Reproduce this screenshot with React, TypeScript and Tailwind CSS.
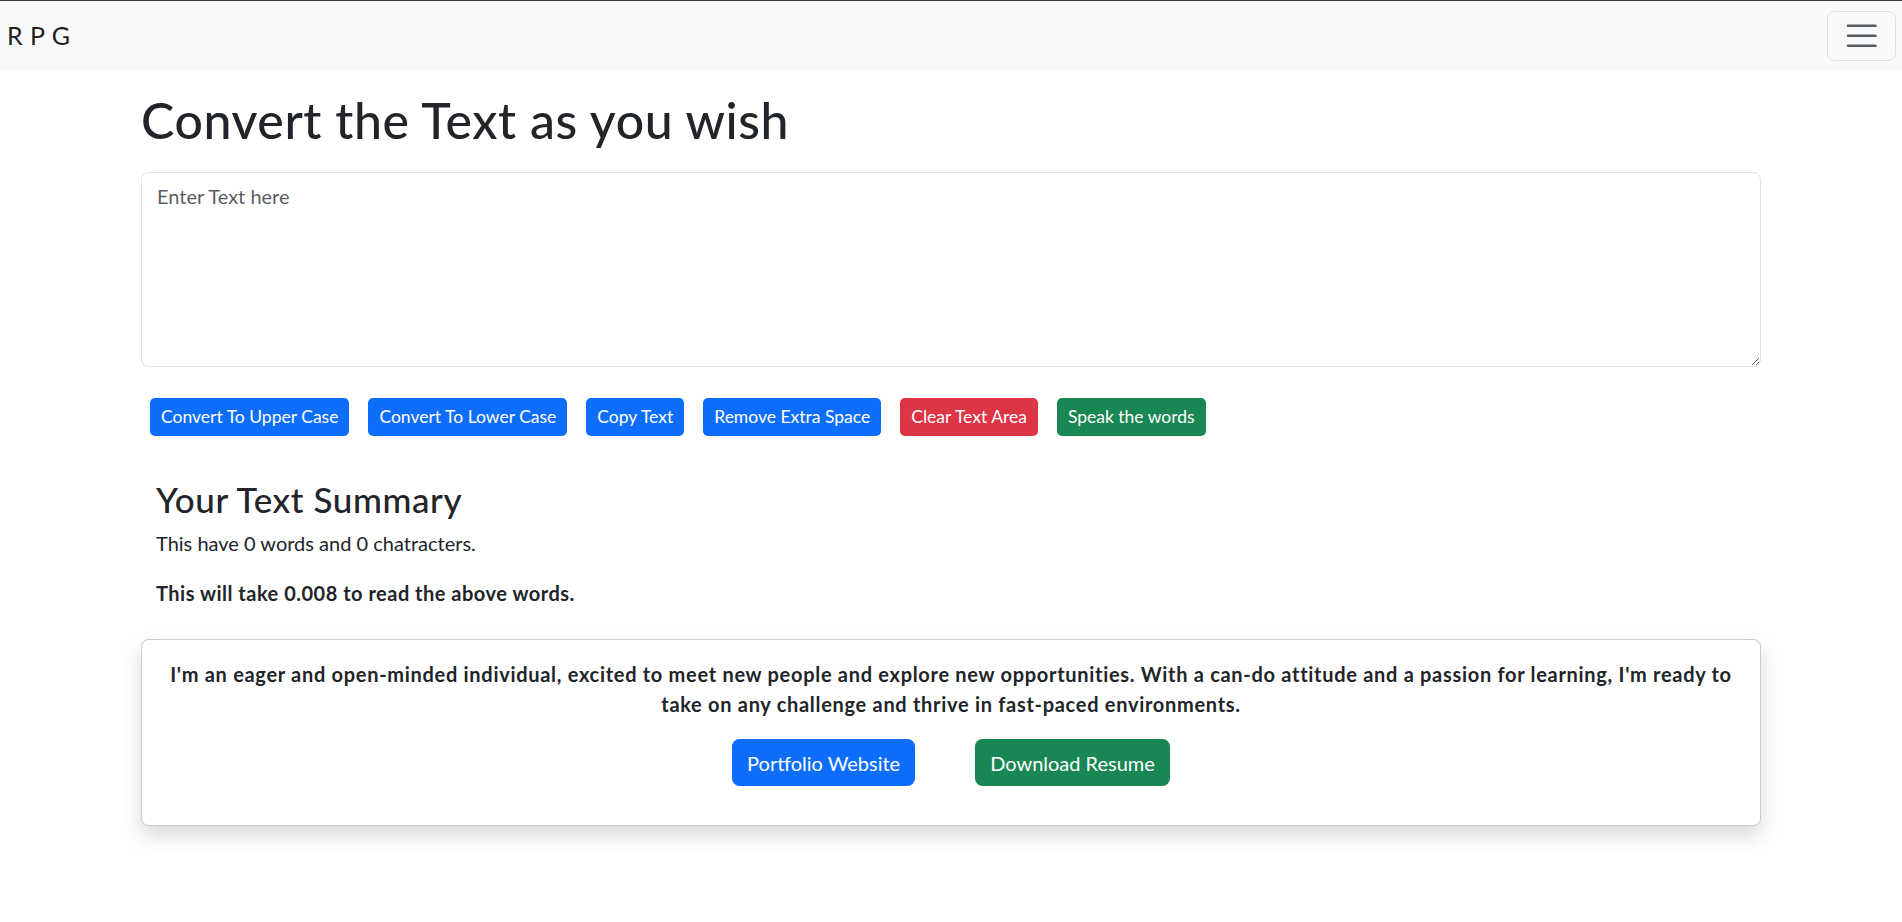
import React, { useState } from 'react';

const font = { fontFamily: 'Lato, "Noto Sans", sans-serif' };

const App: React.FC = () => {
  const [text, setText] = useState('');

  const words = text.split(/\s+/).filter((w) => w.length > 0).length;
  const chars = text.length;

  const smallBtn = 'h-[38px] px-[10px] rounded-[5px] text-[17.5px] leading-[26px] text-white border border-transparent';

  return (
    <div className="min-h-screen bg-white text-[#212529]" style={{ fontFamily: 'Lato, "Noto Sans", sans-serif' }}>
      {/* Navbar */}
      <nav className="border-t border-[#3a3a3a] bg-[#f8f9fa] h-[70px] flex items-center justify-between pl-[7px] pr-[6px]">
        <span className="text-[25px] leading-[37px] text-black/90 tracking-[0.02em]">R P G</span>
        <button className="w-[69px] h-[50px] flex items-center justify-center rounded-[7.5px] border border-black/10">
          <svg width="37.5" height="37.5" viewBox="0 0 30 30">
            <path
              stroke="rgba(33,37,41,0.75)"
              strokeLinecap="round"
              strokeMiterlimit="10"
              strokeWidth="2"
              d="M4 7h22M4 15h22M4 23h22"
            />
          </svg>
        </button>
      </nav>

      {/* Main container */}
      <div className="w-[1620px] mx-auto">
        <h1 className="text-[50px] leading-[60px] font-medium tracking-[0.6px] mt-[20px] mb-[22px]">
          Convert the Text as you wish
        </h1>
        <textarea
          value={text}
          onChange={(e) => setText(e.target.value)}
          placeholder="Enter Text here"
          className="block w-full h-[195px] border border-[#dee2e6] rounded-[7.5px] px-[15px] py-[7.5px] text-[20px] leading-[30px] outline-none placeholder:text-[rgba(33,37,41,0.75)]"
          style={font}
        />

        <div className="flex gap-[19px] ml-[9px] mt-[31px]">
          <button className={`${smallBtn} bg-[#0d6efd]`} onClick={() => setText(text.toUpperCase())}>
            Convert To Upper Case
          </button>
          <button className={`${smallBtn} bg-[#0d6efd]`} onClick={() => setText(text.toLowerCase())}>
            Convert To Lower Case
          </button>
          <button className={`${smallBtn} bg-[#0d6efd]`} onClick={() => navigator.clipboard?.writeText(text)}>
            Copy Text
          </button>
          <button className={`${smallBtn} bg-[#0d6efd]`} onClick={() => setText(text.split(/[ ]+/).join(' '))}>
            Remove Extra Space
          </button>
          <button className={`${smallBtn} bg-[#dc3545]`} onClick={() => setText('')}>
            Clear Text Area
          </button>
          <button className={`${smallBtn} bg-[#198754]`}>Speak the words</button>
        </div>

        {/* Summary */}
        <div className="px-[15px] mt-[42px]">
          <h3 className="text-[35px] leading-[42px] font-medium tracking-[0.6px] mb-[8px]">Your Text Summary</h3>
          <p className="text-[20px] leading-[30px] mb-[20px]">
            This have {words} words and {chars} chatracters.
          </p>
          <p className="text-[20px] leading-[30px] font-bold tracking-[0.5px]">
            This will take {(0.008 * words || 0.008).toString()} to read the above words.
          </p>
        </div>

        {/* About card */}
        <div className="mt-[31px] border border-black/20 rounded-[7.5px] bg-white shadow-[0_10px_20px_rgba(0,0,0,0.15)] px-[20px] pt-[19px] pb-[39px] text-center">
          <p className="text-[20px] leading-[30px] font-bold tracking-[0.7px] mb-[20px]">
            I'm an eager and open-minded individual, excited to meet new people and explore new opportunities. With a
            can-do attitude and a passion for learning, I'm ready to take on any challenge and thrive in fast-paced
            environments.
          </p>
          <div className="flex justify-center gap-[60px]">
            <button className="h-[47px] px-[15px] rounded-[7.5px] bg-[#0d6efd] text-white text-[20px] leading-[30px]">
              Portfolio Website
            </button>
            <button className="h-[47px] px-[15px] rounded-[7.5px] bg-[#198754] text-white text-[20px] leading-[30px]">
              Download Resume
            </button>
          </div>
        </div>
      </div>
    </div>
  );
};

export default App;
